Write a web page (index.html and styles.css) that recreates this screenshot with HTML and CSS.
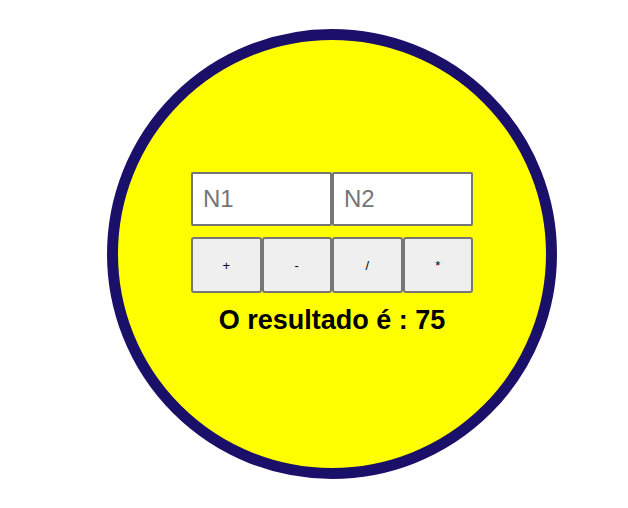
FILE: index.html
```html
<!DOCTYPE html>
<html lang="pt">
<head>
<meta charset="utf-8">
<title>Calculadora</title>
<link rel="stylesheet" href="styles.css">
</head>
<body>
<div class="circle">
  <div class="calc">
    <div class="inputs">
      <input class="num" type="text" placeholder="N1">
      <input class="num" type="text" placeholder="N2">
    </div>
    <div class="ops">
      <button class="op">+</button>
      <button class="op">-</button>
      <button class="op">/</button>
      <button class="op">*</button>
    </div>
    <p class="result">O resultado é : 75</p>
  </div>
</div>
</body>
</html>
```
FILE: styles.css
```css
html, body {
  margin: 0;
  padding: 0;
  background: #ffffff;
  font-family: "Liberation Sans", Arial, sans-serif;
}
.circle {
  box-sizing: border-box;
  width: 450px;
  height: 450px;
  margin: 29px 0 0 107px;
  border: 11px solid #1b1069;
  border-radius: 50%;
  background: #ffff00;
  display: flex;
  align-items: center;
  justify-content: center;
}
.calc {
  display: flex;
  flex-direction: column;
  align-items: center;
  margin-top: 0;
}
.inputs, .ops {
  display: flex;
}
.num {
  box-sizing: border-box;
  width: 141px;
  height: 54px;
  margin: 0;
  padding: 0 10px;
  border: 2px solid #767676;
  border-radius: 2px;
  background: #fff;
  font-family: "Liberation Sans", Arial, sans-serif;
  font-size: 24px;
  color: #000;
}
.num::placeholder {
  color: #757575;
}
.ops {
  margin-top: 11px;
}
.op {
  box-sizing: border-box;
  width: 70.5px;
  height: 56px;
  margin: 0;
  border: 2px solid #767676;
  border-radius: 3px;
  background: #efefef;
  font-family: "Liberation Sans", Arial, sans-serif;
  font-size: 13px;
  color: #000;
}
.result {
  margin: 12px 0 0;
  font-size: 27px;
  font-weight: bold;
  color: #000;
}
```
